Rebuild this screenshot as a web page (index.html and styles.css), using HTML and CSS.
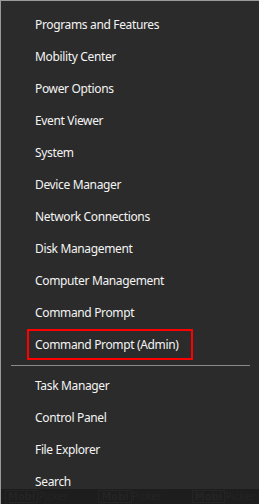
FILE: index.html
```html
<!DOCTYPE html>
<html lang="en">
<head>
  <meta charset="UTF-8">
  <meta name="viewport" content="width=device-width, initial-scale=1.0">
  <title>Quick Link Menu</title>
  <link rel="stylesheet" href="styles.css">
</head>
<body>
  <div class="menu">
    <ul class="group">
      <li class="item">Programs and Features</li>
      <li class="item">Mobility Center</li>
      <li class="item">Power Options</li>
      <li class="item">Event Viewer</li>
      <li class="item">System</li>
      <li class="item">Device Manager</li>
      <li class="item">Network Connections</li>
      <li class="item">Disk Management</li>
      <li class="item">Computer Management</li>
      <li class="item">Command Prompt</li>
      <li class="item"><span class="marked">Command Prompt (Admin)</span></li>
    </ul>
    <div class="separator"></div>
    <ul class="group">
      <li class="item">Task Manager</li>
      <li class="item">Control Panel</li>
      <li class="item">File Explorer</li>
      <li class="item">Search</li>
    </ul>
  </div>

  <div class="watermark">
    <span class="mark"><b>Mobi</b>Picker</span>
    <span class="mark"><b>Mobi</b>Picker</span>
    <span class="mark"><b>Mobi</b>Picker</span>
  </div>
</body>
</html>
```

FILE: styles.css
```css
html, body {
  margin: 0;
  height: 100%;
}
body {
  position: relative;
  box-sizing: border-box;
  background: #2b2b2b;
  border-top: 1px solid #9a9a9a;
  border-left: 1px solid #9a9a9a;
  font-family: "Noto Sans", sans-serif;
  font-size: 12px;
  letter-spacing: -0.35px;
  color: #f4f4f4;
  overflow: hidden;
}
.menu {
  padding-top: 7px;
}
.group {
  list-style: none;
  margin: 0;
  padding: 0;
}
.item {
  display: flex;
  align-items: center;
  height: 32px;
  padding-left: 34px;
}
.marked {
  display: flex;
  align-items: center;
  box-sizing: border-box;
  height: 31px;
  margin-top: 1px;
  margin-left: -8px;
  padding: 0 12px 0 6px;
  border: 2px solid #ff0000;
}
.separator {
  height: 1px;
  margin: 5px 9px 3px 10px;
  background: #8a8a8a;
}
.watermark {
  position: absolute;
  left: 0;
  right: 0;
  bottom: 0;
  height: 15px;
  display: flex;
  justify-content: space-between;
  align-items: center;
  padding: 0 4px;
  background: #1d1d1d;
}
.mark {
  font-family: "DejaVu Sans", sans-serif;
  font-size: 10px;
  letter-spacing: 0;
  color: #242424;
}
.mark b {
  padding: 0 2px;
  border: 1px solid #242424;
  font-weight: bold;
}
```
